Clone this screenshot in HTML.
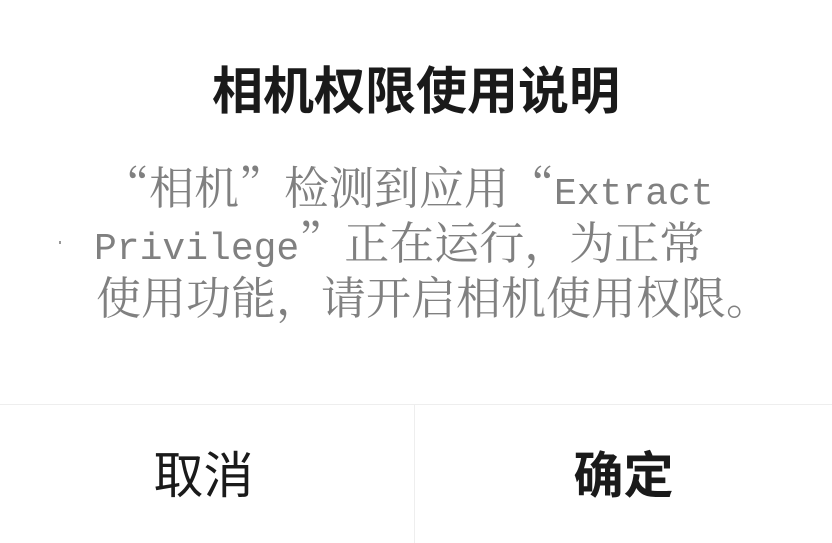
<!DOCTYPE html>
<html><head><meta charset="utf-8"><style>
html,body{margin:0;padding:0;background:#fff;width:832px;height:543px;overflow:hidden;position:relative}
.t{position:absolute;left:0;width:832px;top:60px;text-align:center;font:bold 51px/64px "Liberation Sans","Noto Sans CJK SC",sans-serif;color:#1a1a1a}
.l{position:absolute;white-space:nowrap;font:45px/56px "Noto Serif CJK SC",serif;color:#808080}
.m{font-family:"Liberation Mono",monospace;font-size:38px}
.hl{position:absolute;left:0;top:404px;width:832px;height:1px;background:#eee}
.vl{position:absolute;left:414px;top:405px;width:1px;height:138px;background:#eee}
.b{position:absolute;top:443px;font:50px/66px "Liberation Sans","Noto Sans CJK SC",sans-serif;color:#1a1a1a;text-align:center;width:415px}
</style></head><body>
<div class="t">相机权限使用说明</div>
<div class="l" style="left:104px;top:157px">“相机”检测到应用“<span class="m">Extract</span></div>
<div class="l" style="left:94px;top:212px"><span class="m">Privilege</span>”正在运行，为正常</div>
<div class="l" style="left:96px;top:267px">使用功能，请开启相机使用权限。</div>
<div style="position:absolute;left:59px;top:241px;width:2px;height:3px;background:#999"></div>
<div class="hl"></div><div class="vl"></div>
<div class="b" style="left:-4px;font-weight:normal">取消</div>
<div class="b" style="left:416px;font-weight:bold">确定</div>
</body></html>
